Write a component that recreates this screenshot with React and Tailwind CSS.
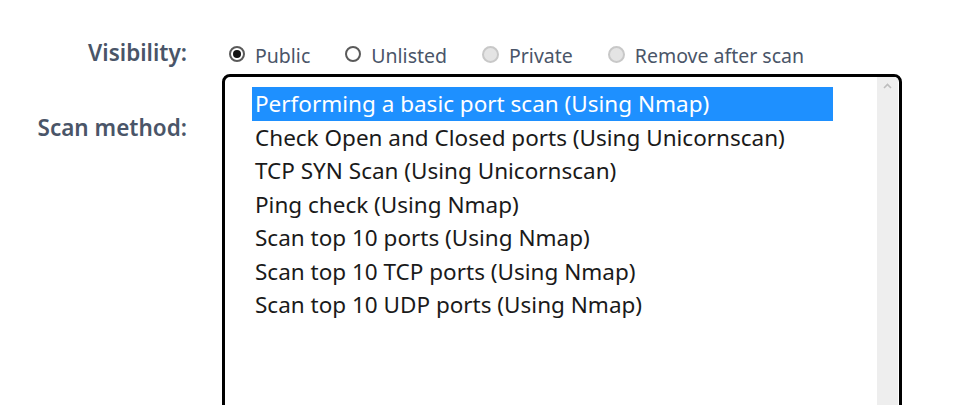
import { useState } from 'react';

const methods = [
  'Performing a basic port scan (Using Nmap)',
  'Check Open and Closed ports (Using Unicornscan)',
  'TCP SYN Scan (Using Unicornscan)',
  'Ping check (Using Nmap)',
  'Scan top 10 ports (Using Nmap)',
  'Scan top 10 TCP ports (Using Nmap)',
  'Scan top 10 UDP ports (Using Nmap)',
];

const visibility = [
  { label: 'Public', checked: true },
  { label: 'Unlisted' },
  { label: 'Private', disabled: true },
  { label: 'Remove after scan', disabled: true },
];

function Radio({ checked, disabled }) {
  if (disabled) {
    return <span className="inline-block w-[17px] h-[17px] rounded-full border-2 border-[#c8c8c8] bg-[#e4e4e4]" />;
  }
  return (
    <span className="inline-flex items-center justify-center w-[16px] h-[16px] rounded-full border-2 border-[#5a5a5a] bg-white">
      {checked && <span className="w-[8px] h-[8px] rounded-full bg-[#111]" />}
    </span>
  );
}

export default function App() {
  const [selected, setSelected] = useState(0);

  return (
    <div className="h-[405px] overflow-hidden bg-white font-['Noto_Sans',sans-serif] pt-[39px]">
      <div className="grid grid-cols-[187px_680px] gap-x-[35px]">
        <div className="text-right font-semibold text-[22.5px] text-[#4a5568] leading-[28px]">Visibility:</div>
        <div className="flex items-center pl-[7px] h-[28px] text-[19.5px] text-[#4a5568] mt-[1px]">
          {visibility.map((v, i) => (
            <label key={i} className="flex items-center gap-[10px] mr-[35px]">
              <Radio checked={v.checked} disabled={v.disabled} />
              <span className="pt-[3px]">{v.label}</span>
            </label>
          ))}
        </div>

        <div className="text-right font-semibold text-[22.5px] text-[#4a5568] leading-[28px] pt-[46px]">Scan method:</div>
        <div className="mt-[6px] h-[400px] border-[3px] border-black rounded-[8px] flex overflow-hidden">
          <div className="flex-1 pl-[27px] pt-[10px]">
            {methods.map((m, i) => (
              <div
                key={i}
                onClick={() => setSelected(i)}
                className={`w-[581px] h-[33.5px] pl-[3px] text-[22.5px] leading-[33px] whitespace-nowrap ${selected === i ? 'bg-[#1e90ff] text-white' : 'text-[#1a1a1a]'}`}
              >
                {m}
              </div>
            ))}
          </div>
          <div className="w-[21px] bg-[#eeeeee] mr-[1px] flex justify-center pt-[6px]">
            <svg width="9" height="6" viewBox="0 0 9 6">
              <path d="M1 5 L4.5 1.5 L8 5" stroke="#bdbdbd" strokeWidth="1.6" fill="none" />
            </svg>
          </div>
        </div>
      </div>
    </div>
  );
}
